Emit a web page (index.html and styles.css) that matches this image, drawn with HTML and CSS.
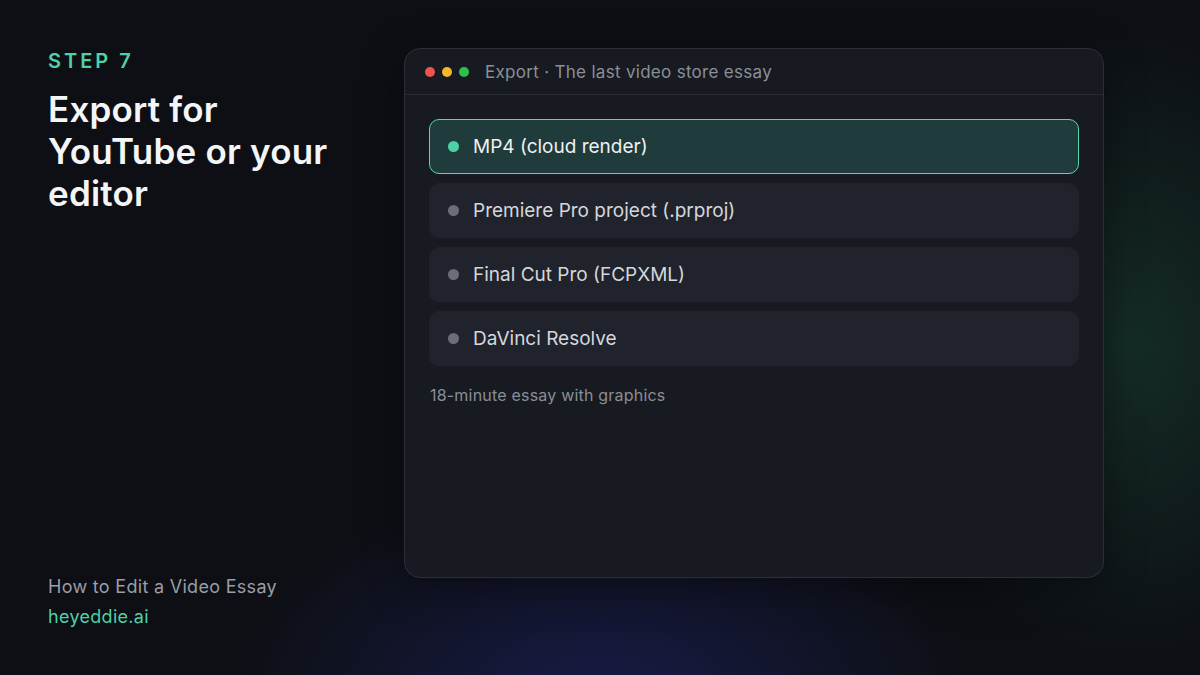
FILE: index.html
```html
<!DOCTYPE html>
<html>
<head>
    <meta charset="utf-8">
    <title>Step 7 · Export</title>
    <link rel="stylesheet" href="styles.css">
</head>
<body>

    <div class="slide">
        <div class="intro">
            <div class="intro-top">
                <div class="step">STEP 7</div>
                <h1 class="headline">Export for<br>YouTube or your<br>editor</h1>
            </div>
            <div class="intro-bottom">
                <div class="guide-name">How to Edit a Video Essay</div>
                <div class="site">heyeddie.ai</div>
            </div>
        </div>

        <div class="window">
            <div class="window-bar">
                <span class="dot red"></span>
                <span class="dot yellow"></span>
                <span class="dot green"></span>
                <span class="window-title">Export · The last video store essay</span>
            </div>
            <div class="window-body">
                <div class="option selected">
                    <span class="option-dot"></span>
                    <span>MP4 (cloud render)</span>
                </div>
                <div class="option">
                    <span class="option-dot"></span>
                    <span>Premiere Pro project (.prproj)</span>
                </div>
                <div class="option">
                    <span class="option-dot"></span>
                    <span>Final Cut Pro (FCPXML)</span>
                </div>
                <div class="option">
                    <span class="option-dot"></span>
                    <span>DaVinci Resolve</span>
                </div>
                <div class="note">18-minute essay with graphics</div>
            </div>
        </div>
    </div>

</body>
</html>
```

FILE: styles.css
```css
* {
    margin: 0;
    padding: 0;
    box-sizing: border-box;
}

html, body {
    width: 1200px;
    height: 675px;
    overflow: hidden;
}

body {
    font-family: Inter, "Noto Sans", Arial, sans-serif;
    color: #e6e8ec;
    background-color: #0d0f14;
    background-image:
        radial-gradient(ellipse 240px 320px at 1130px 345px, rgba(28, 72, 58, 0.5), rgba(28, 72, 58, 0) 100%),
        radial-gradient(ellipse 380px 220px at 600px 700px, rgba(28, 32, 90, 0.7), rgba(28, 32, 90, 0) 100%);
}

.slide {
    display: flex;
    height: 675px;
    padding: 48px 96px 44px 48px;
}

.intro {
    width: 356px;
    display: flex;
    flex-direction: column;
    justify-content: space-between;
}

.step {
    font-size: 20px;
    font-weight: 600;
    letter-spacing: 3px;
    color: #4fd1a5;
    line-height: 26px;
}

.headline {
    margin-top: 14px;
    font-size: 35px;
    font-weight: 600;
    line-height: 42px;
    letter-spacing: 0.2px;
    color: #f4f5f7;
}

.guide-name {
    font-size: 18px;
    line-height: 28px;
    letter-spacing: 0.3px;
    color: #9a9ea7;
}

.site {
    margin-top: 2px;
    font-size: 18px;
    line-height: 28px;
    letter-spacing: 0.3px;
    color: #4fd1a5;
}

.window {
    width: 700px;
    height: 530px;
    background: #171a21;
    border: 1px solid #2c2f37;
    border-radius: 16px;
    box-shadow: 0 10px 40px rgba(0, 0, 0, 0.35);
    overflow: hidden;
}

.window-bar {
    height: 46px;
    display: flex;
    align-items: center;
    padding-left: 20px;
    border-bottom: 1px solid #282b33;
}

.dot {
    width: 10px;
    height: 10px;
    border-radius: 50%;
    margin-right: 7px;
}

.dot.red { background: #ef5350; }
.dot.yellow { background: #f6b62c; }
.dot.green { background: #2fbf4a; }

.window-title {
    margin-left: 9px;
    font-size: 17px;
    letter-spacing: 0.3px;
    color: #8b8f98;
}

.window-body {
    padding: 24px 24px 0 24px;
    display: flex;
    flex-direction: column;
    gap: 9px;
}

.option {
    height: 55px;
    display: flex;
    align-items: center;
    gap: 14px;
    padding-left: 18px;
    background: #20232b;
    border: 1px solid #20232b;
    border-radius: 10px;
    font-size: 19px;
    color: #d4d7dd;
}

.option-dot {
    width: 11px;
    height: 11px;
    border-radius: 50%;
    background: #6b6e76;
}

.option.selected {
    background: #1f3b3b;
    border-color: #5fd4b1;
    color: #eef0f3;
}

.option.selected .option-dot {
    background: #4fd1a5;
}

.note {
    margin-top: 10px;
    padding-left: 1px;
    font-size: 16px;
    letter-spacing: 0.2px;
    color: #8a8e97;
}
```
